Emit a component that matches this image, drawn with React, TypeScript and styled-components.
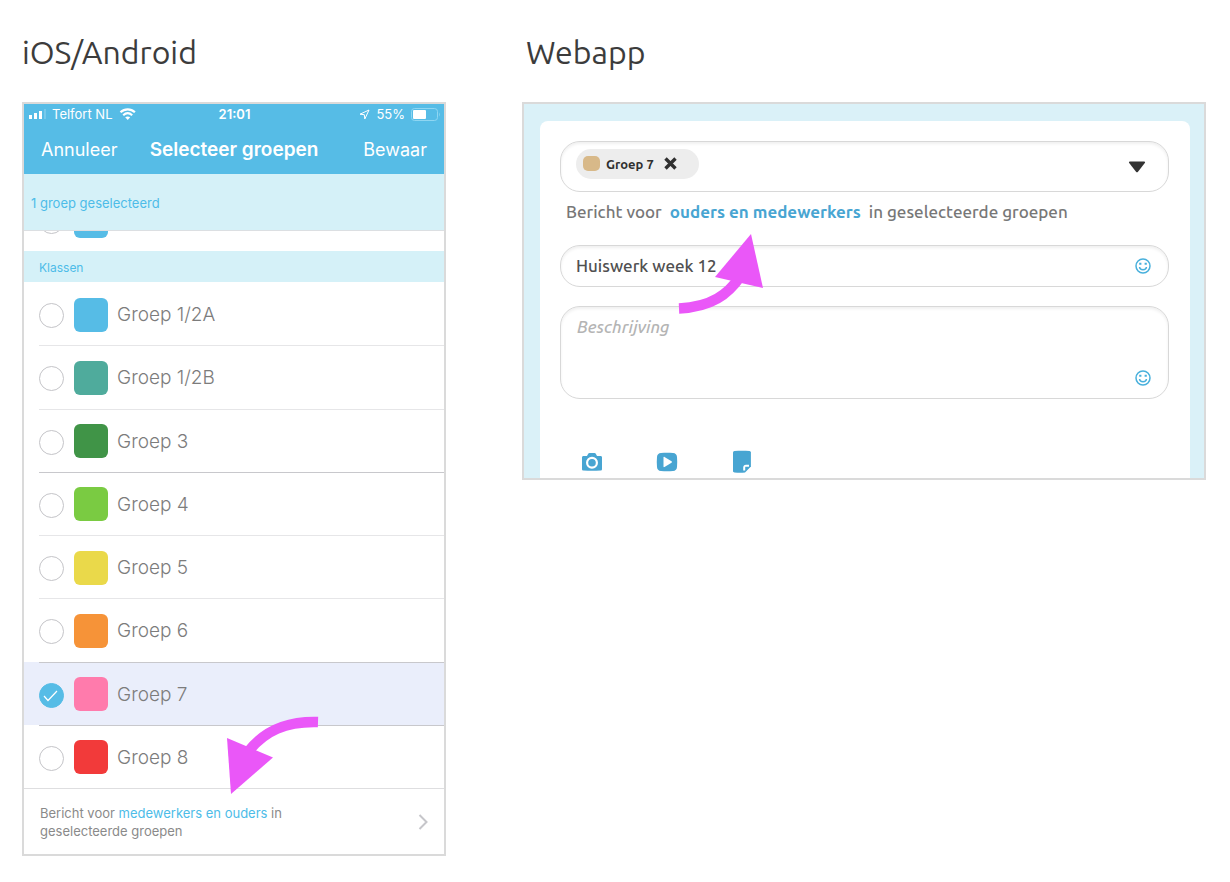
import React from 'react';
import styled, { createGlobalStyle } from 'styled-components';

const ios = 'Inter, "Liberation Sans", sans-serif';
const web = 'Ubuntu, "Noto Sans", "Open Sans", sans-serif';

const Global = createGlobalStyle`
  *, *::before, *::after { box-sizing: border-box; }
  body { margin: 0; background: #fff; font-family: ${web}; }
  button, input, textarea { font: inherit; color: inherit; }
  button { border: 0; padding: 0; background: none; cursor: pointer; }
  a { text-decoration: none; }
`;

const Page = styled.main`
  display: grid;
  grid-template-columns: 424fr 684fr;
  column-gap: 76px;
  align-items: start;
  padding: 30px 24px 24px 22px;
`;

const Column = styled.section`
  position: relative;
`;

const Heading = styled.h1<{ $indent?: number }>`
  margin: 0 0 28px;
  padding-left: ${p => p.$indent ?? 0}px;
  font-size: 32px;
  line-height: 44px;
  font-weight: 400;
  color: #3c3c3c;
`;

const Frame = styled.div`
  border: 2px solid #dadada;
  overflow: hidden;
`;

/* ---------- Phone ---------- */

const Phone = styled(Frame)`
  font-family: ${ios};
`;

const PhoneTop = styled.header`
  background: #56bce6;
  color: #fff;
`;

const StatusBar = styled.div`
  display: grid;
  grid-template-columns: 1fr auto 1fr;
  align-items: center;
  height: 20px;
  padding: 0 4px 0 5px;
  font-size: 13px;
  line-height: 20px;
`;

const StatusGroup = styled.div<{ $end?: boolean }>`
  display: flex;
  align-items: center;
  gap: 6px;
  justify-content: ${p => (p.$end ? 'flex-end' : 'flex-start')};
`;

const Clock = styled.span`
  font-weight: 600;
`;

const NavBar = styled.div`
  display: grid;
  grid-template-columns: 1fr auto 1fr;
  align-items: center;
  height: 50px;
  padding: 0 17px;
  font-size: 18px;
`;

const NavButton = styled.button<{ $end?: boolean }>`
  justify-self: ${p => (p.$end ? 'end' : 'start')};
`;

const NavTitle = styled.h2`
  margin: 0;
  font-size: 19px;
  font-weight: 600;
`;

const Selected = styled.p`
  margin: 0;
  padding: 1px 7px 0;
  height: 57px;
  line-height: 57px;
  background: #d5f1f8;
  border-bottom: 1px solid #dcdfe2;
  font-size: 13px;
  color: #4dbce8;
`;

const ScrolledRow = styled.div`
  display: flex;
  flex-direction: column;
  justify-content: flex-end;
  height: 20px;
  overflow: hidden;
`;

const GroupHeader = styled.h3`
  margin: 0;
  padding: 2px 15px 0;
  height: 31px;
  line-height: 29px;
  background: #d5f1f8;
  font-size: 12px;
  font-weight: 400;
  color: #4dbce8;
`;

const List = styled.div`
  display: grid;
  grid-auto-rows: 1fr;
  height: 506px;
`;

const Row = styled.label<{ $on?: boolean }>`
  position: relative;
  display: flex;
  align-items: center;
  min-height: 63px;
  padding: 2px 0 0 15px;
  font-size: 19px;
  font-weight: 300;
  color: #7c7c7c;
  background: ${p => (p.$on ? '#eaeefb' : 'transparent')};
`;

const Divider = styled.span<{ $dark?: boolean }>`
  position: absolute;
  right: 0;
  top: 0;
  left: 15px;
  height: 1px;
  background: ${p => (p.$dark ? '#c8c8cc' : '#e6e6e8')};
`;

const Round = styled.input`
  appearance: none;
  flex: none;
  width: 25px;
  height: 25px;
  margin: 2px 10px 0 0;
  border: 1px solid #c4c4c8;
  border-radius: 50%;
  background: #fff;

  &:checked {
    border-color: #56bce6;
    background: #56bce6 url("data:image/svg+xml,%3Csvg xmlns='http://www.w3.org/2000/svg' viewBox='0 0 23 23' fill='none' stroke='white' stroke-width='1.2'%3E%3Cpath d='M4 12l4 4.5L17 7'/%3E%3C/svg%3E") center / 23px 23px no-repeat;
  }
`;

const Swatch = styled.span<{ $color: string }>`
  flex: none;
  width: 34px;
  height: 34px;
  margin-right: 9px;
  border-radius: 6px;
  background: ${p => p.$color};
`;

const PhoneFooter = styled.footer`
  display: flex;
  align-items: center;
  justify-content: space-between;
  height: 66px;
  padding: 0 16px;
  border-top: 1px solid #dedee0;
  font-size: 13px;
  line-height: 18px;
  color: #8a8a8a;

  p { margin: 0; }
  a { color: #4dbce8; }
`;

/* ---------- Web app ---------- */

const WebShot = styled(Frame)`
  padding: 17px 14px 0 16px;
  background: #daf1f8;
`;

const Card = styled.form`
  display: flex;
  flex-direction: column;
  padding: 20px 21px 4px 20px;
  border-radius: 8px 8px 0 0;
  background: #fff;
  color: #777;
  font-size: 17px;
`;

const Field = styled.div<{ $height: number; $top?: boolean }>`
  display: flex;
  align-items: ${p => (p.$top ? 'stretch' : 'center')};
  justify-content: space-between;
  height: ${p => p.$height}px;
  padding: 0 17px 0 15px;
  border: 1px solid #d8d8d8;
  border-radius: 20px;
  box-shadow: inset 0 2px 3px #f0f0f0;
`;

const Tag = styled.span`
  display: flex;
  align-items: center;
  height: 30px;
  width: 123px;
  margin-bottom: 6px;
  padding: 0 7px;
  border-radius: 15px;
  background: #ededed;
  font-size: 13px;
  font-weight: 700;
  color: #303030;
`;

const TagColor = styled.span`
  width: 17px;
  height: 15px;
  margin-right: 6px;
  border-radius: 5px;
  background: #d8b989;
`;

const IconButton = styled.button<{ $gap?: number }>`
  display: flex;
  margin-left: ${p => p.$gap ?? 0}px;
`;

const Caret = styled(IconButton)`
  margin-right: 5px;
`;

const Audience = styled.p`
  margin: 6px 6px 20px;
  line-height: 27px;
  font-weight: 500;
  white-space: nowrap;

  a { margin: 0 4px; color: #48a5d2; font-weight: 700; }
`;

const TextInput = styled.input`
  flex: 1;
  min-width: 0;
  border: 0;
  padding: 0 0 2px;
  outline: 0;
  background: transparent;
  font-weight: 500;
  color: #505050;
`;

const TextArea = styled.textarea`
  flex: 1;
  min-width: 0;
  border: 0;
  outline: 0;
  resize: none;
  padding: 8px 0 0 1px;
  background: transparent;
  line-height: 24px;

  &::placeholder { font-style: italic; font-weight: 500; color: #b4b4b4; opacity: 1; }
`;

const AreaEnd = styled.div`
  display: flex;
  align-items: flex-end;
  padding-bottom: 12px;
`;

const Gap = styled.div`
  height: 19px;
`;

const Tools = styled.div`
  display: flex;
  align-items: center;
  gap: 53px;
  height: 24px;
  margin-top: 51px;
  padding-left: 21px;
`;

const Arrow = styled.svg<{ $left: number; $top: number }>`
  position: absolute;
  left: ${p => p.$left}px;
  top: ${p => p.$top}px;
  pointer-events: none;
`;

const Smiley = () => (
  <svg width="16" height="16" viewBox="0 0 16 16" fill="none" stroke="#48b0dc" strokeWidth="1.5">
    <circle cx="8" cy="8" r="7" />
    <path d="M4.500 9c.4 3.600 6.600 3.600 7 0" />
    <path d="M4.200 5.700h2.200M9.600 5.700h2.200" strokeWidth="2" />
  </svg>
);

const groups = [
  { name: 'Groep 1/2A', color: '#56bce6' },
  { name: 'Groep 1/2B', color: '#4fab9c' },
  { name: 'Groep 3', color: '#409447' },
  { name: 'Groep 4', color: '#7acb42', dark: true },
  { name: 'Groep 5', color: '#ead94a' },
  { name: 'Groep 6', color: '#f69338' },
  { name: 'Groep 7', color: '#ff7bac', dark: true, on: true },
  { name: 'Groep 8', color: '#f23a3a', dark: true },
];

export default function App() {
  return (
    <>
      <Global />
      <Page>
        <Column>
          <Heading>iOS/Android</Heading>
          <Phone>
            <PhoneTop>
              <StatusBar>
                <StatusGroup>
                  <svg width="17" height="12" viewBox="0 0 17 12" fill="#fff">
                    <rect x="0" y="7" width="3" height="4" />
                    <rect x="5" y="5" width="3" height="6" />
                    <rect x="10" y="3" width="3" height="8" />
                    <rect x="15" y="1" width="2" height="10" opacity=".2" />
                  </svg>
                  <span>Telfort NL</span>
                  <svg width="18" height="12" viewBox="0 0 18 12" fill="none" stroke="#fff" strokeWidth="2.200">
                    <path d="M2.500 4.300c4.200-4 10.200-4 14.400 0M5.200 7.200c2.800-2.500 6.200-2.500 9 0" />
                    <path d="M9.700 11.900L7.200 9.300c1.500-1.200 3.500-1.200 5 0z" fill="#fff" stroke="none" />
                  </svg>
                </StatusGroup>
                <Clock>21:01</Clock>
                <StatusGroup $end>
                  <svg width="11" height="11" viewBox="0 0 11 11" fill="none" stroke="#fff" strokeLinejoin="round">
                    <path d="M10 1L1 5.200l4.300.5.500 4.300z" />
                  </svg>
                  <span>55%</span>
                  <svg width="29" height="13" viewBox="0 0 29 13" fill="none">
                    <rect x=".5" y=".5" width="26" height="12" rx="3" stroke="#8fd6f2" />
                    <rect x="2" y="2" width="13" height="9" rx="1" fill="#fff" />
                    <path d="M28 4.500c1 1 1 3 0 4z" fill="#8fd6f2" />
                  </svg>
                </StatusGroup>
              </StatusBar>
              <NavBar>
                <NavButton type="button">Annuleer</NavButton>
                <NavTitle>Selecteer groepen</NavTitle>
                <NavButton type="button" $end>Bewaar</NavButton>
              </NavBar>
            </PhoneTop>
            <Selected>1 groep geselecteerd</Selected>
            <ScrolledRow>
              <Row>
                <Round type="checkbox" aria-label="Groep" />
                <Swatch $color="#56bce6" />
              </Row>
            </ScrolledRow>
            <GroupHeader>Klassen</GroupHeader>
            <List>
              {groups.map((g, i) => (
                <Row key={g.name} $on={g.on}>
                  <Round type="checkbox" defaultChecked={g.on} />
                  <Swatch $color={g.color} />
                  {g.name}
                  {i > 0 && <Divider $dark={g.dark} />}
                </Row>
              ))}
            </List>
            <PhoneFooter>
              <p>
                Bericht voor <a href="#doelgroep">medewerkers en ouders</a> in
                <br />
                geselecteerde groepen
              </p>
              <svg width="10" height="16" viewBox="0 0 10 16" fill="none" stroke="#c6c6ca" strokeWidth="2">
                <path d="M1.500 1l7 7-7 7" />
              </svg>
            </PhoneFooter>
          </Phone>
          <Arrow $left={204} $top={686} width="94" height="80" viewBox="0 0 94 80" fill="#ea57f8">
            <path d="M92 6C60 5 38 15 22 36" fill="none" stroke="#ea57f8" strokeWidth="10.500" />
            <path d="M1 22l46 19.500L5 78z" />
          </Arrow>
        </Column>

        <Column>
          <Heading $indent={4}>Webapp</Heading>
          <WebShot>
            <Card>
              <Field $height={51}>
                <Tag>
                  <TagColor />
                  Groep 7
                  <IconButton type="button" aria-label="Verwijder Groep 7" $gap={10}>
                    <svg width="13" height="13" viewBox="0 0 13 13" stroke="#303030" strokeWidth="3.400">
                      <path d="M1.500 1.500l10 10M11.500 1.500l-10 10" />
                    </svg>
                  </IconButton>
                </Tag>
                <Caret type="button" aria-label="Kies groepen">
                  <svg width="18" height="12" viewBox="0 0 18 12" fill="#333">
                    <path d="M1.800.5h14.400c.9 0 1.100.8.600 1.500L10 10.800c-.6.700-1.400.7-2 0L1.200 2C.7 1.300.9.500 1.800.5z" />
                  </svg>
                </Caret>
              </Field>
              <Audience>
                Bericht voor <a href="#doelgroep">ouders en medewerkers</a> in geselecteerde groepen
              </Audience>
              <Field $height={42}>
                <TextInput aria-label="Titel" defaultValue="Huiswerk week 12" />
                <IconButton type="button" aria-label="Emoji in titel"><Smiley /></IconButton>
              </Field>
              <Gap />
              <Field $height={93} $top>
                <TextArea aria-label="Beschrijving" placeholder="Beschrijving" />
                <AreaEnd>
                  <IconButton type="button" aria-label="Emoji in beschrijving"><Smiley /></IconButton>
                </AreaEnd>
              </Field>
              <Tools>
                <IconButton type="button" aria-label="Foto">
                  <svg width="22" height="20" viewBox="0 0 22 20">
                    <path d="M2.500 4H6l1.200-2.200c.3-.5.700-.8 1.300-.8h5c.6 0 1 .3 1.300.8L16 4h3.500c1 0 1.500.6 1.500 1.500V17c0 1-.6 1.500-1.500 1.500-5.500.4-11.500.4-17 0C1.600 18.500 1 18 1 17V5.500C1 4.600 1.600 4 2.500 4z" fill="#48a5d2" />
                    <circle cx="11" cy="10.800" r="4.900" fill="#48a5d2" stroke="#fff" strokeWidth="2.200" />
                  </svg>
                </IconButton>
                <IconButton type="button" aria-label="Video">
                  <svg width="22" height="20" viewBox="0 0 22 20">
                    <path d="M5 1c4-.4 8-.4 12 0 2.500.2 3.800 1.500 4 4 .3 3.300.3 6.700 0 10-.2 2.500-1.500 3.800-4 4-4 .4-8 .4-12 0-2.500-.2-3.800-1.500-4-4-.3-3.300-.3-6.700 0-10C1.200 2.500 2.500 1.200 5 1z" fill="#48a5d2" />
                    <path d="M7.500 5.500v9c0 .6.400.8 1 .5l7-4.300c.6-.4.600-1 0-1.400L8.500 5c-.6-.3-1-.1-1 .5z" fill="#fff" />
                  </svg>
                </IconButton>
                <IconButton type="button" aria-label="Bestand">
                  <svg width="22" height="24" viewBox="0 0 22 24">
                    <path d="M3.500 1c5-.5 10-.5 15 0 .8.100 1.400.600 1.400 1.500v14L14 22.500c-3.500.4-7 .3-10.500 0C2.600 22.400 2 22 2 21V2.500C2 1.600 2.600 1.100 3.500 1z" fill="#48a5d2" />
                    <path d="M13.200 20.500v-3c0-1.200.6-1.800 1.800-1.800h3" fill="none" stroke="#fff" strokeWidth="2" />
                  </svg>
                </IconButton>
              </Tools>
            </Card>
          </WebShot>
          <Arrow $left={156} $top={203} width="87" height="82" viewBox="0 0 87 82" fill="#ea57f8">
            <path d="M1 75.500C34 74 50 61 62 44" fill="none" stroke="#ea57f8" strokeWidth="10.500" />
            <path d="M73 1l12 54-48-11z" />
          </Arrow>
        </Column>
      </Page>
    </>
  );
}
